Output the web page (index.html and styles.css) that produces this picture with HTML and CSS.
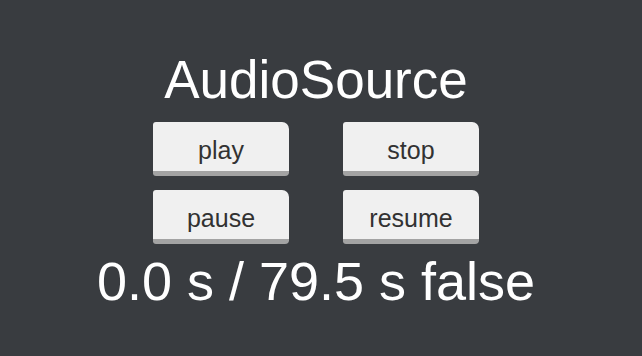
FILE: index.html
```html
<!DOCTYPE html>
<html lang="en">
<head>
    <meta charset="UTF-8">
    <title>AudioSource</title>
    <link rel="stylesheet" href="styles.css">
</head>
<body>
    <div class="panel">
        <h1 class="title">AudioSource</h1>
        <div class="controls">
            <button class="btn">play</button>
            <button class="btn">stop</button>
            <button class="btn">pause</button>
            <button class="btn">resume</button>
        </div>
        <p class="status">0.0 s / 79.5 s false</p>
    </div>
</body>
</html>
```

FILE: styles.css
```css
* {
    margin: 0;
    padding: 0;
    box-sizing: border-box;
    font-family: 'Liberation Sans', Arial, sans-serif;
}

html, body {
    height: 100%;
}

body {
    background: #393c40;
    color: #ffffff;
}

.panel {
    display: flex;
    flex-direction: column;
    align-items: center;
    padding-top: 50px;
    padding-right: 10px;
}

.title {
    font-size: 53px;
    font-weight: normal;
    line-height: 60px;
}

.controls {
    display: grid;
    grid-template-columns: 136px 136px;
    column-gap: 54px;
    row-gap: 14px;
    margin-top: 12px;
}

.btn {
    height: 54px;
    background: #f0f0f0;
    color: #323232;
    border: none;
    border-bottom: 5px solid #a3a3a3;
    border-radius: 3px 7px 4px 3px;
    font-size: 25px;
    line-height: 30px;
    padding-top: 6px;
    cursor: pointer;
}

.status {
    font-size: 54px;
    line-height: 62px;
    margin-top: 6px;
}
```
